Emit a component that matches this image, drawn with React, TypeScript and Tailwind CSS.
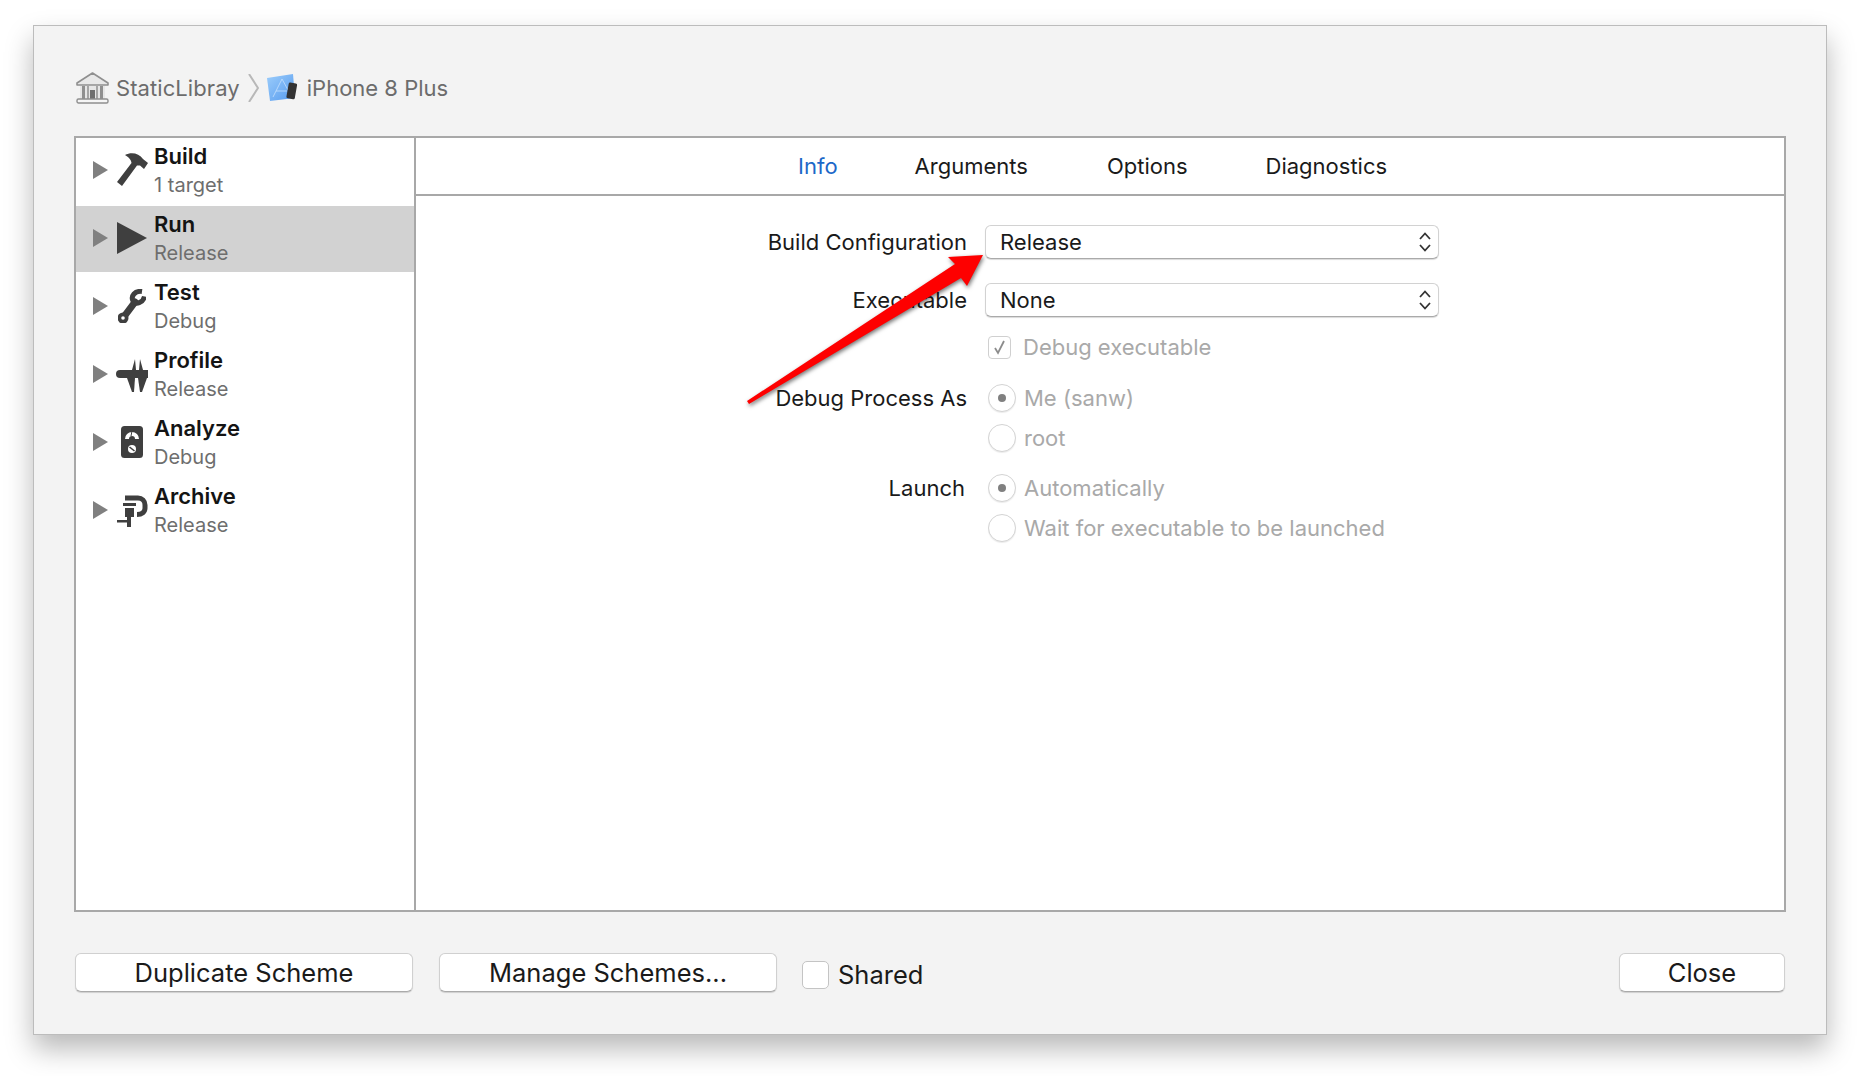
import React from 'react';

const FONT = "font-['Inter','Liberation_Sans',sans-serif]";

function Hammer() {
  return (
    <svg width="32" height="34" viewBox="0 0 32 34">
      <path d="M9 2C15 -1 23 0 27 6L32 10L28 16L24 12.5L21 12.5L6 33L1 29L15.5 10C15 6 12 4 9 2Z" fill="#3f3f3f" />
    </svg>
  );
}

function Play() {
  return (
    <svg width="30" height="32" viewBox="0 0 30 32">
      <polygon points="0,0 30,16 0,32" fill="#3f3f3f" />
    </svg>
  );
}

function Wrench() {
  return (
    <svg width="28" height="34" viewBox="0 0 28 34" fill="none">
      <path d="M5 29L17 13" stroke="#3f3f3f" strokeWidth="7" strokeLinecap="round" />
      <circle cx="5" cy="29" r="5.5" fill="#3f3f3f" />
      <circle cx="5" cy="29" r="1.8" fill="#fff" />
      <path d="M24 2.5C17 1.5 12.5 7 15 12C18 16 25 14 26.5 7.5" stroke="#3f3f3f" strokeWidth="5" />
    </svg>
  );
}

function Caliper() {
  return (
    <svg width="32" height="37" viewBox="0 0 32 37">
      <path d="M4 14H32V22H4A4 4 0 0 1 4 14Z" fill="#3f3f3f" />
      <polygon points="16,14 20,14 19,3" fill="#3f3f3f" />
      <polygon points="23,14 27,14 24,3" fill="#3f3f3f" />
      <polygon points="11,22 19,22 18,36 16,36" fill="#3f3f3f" />
      <polygon points="22,22 31,22 26,36 24,36" fill="#3f3f3f" />
    </svg>
  );
}

function Analyze() {
  return (
    <svg width="22" height="32" viewBox="0 0 22 32">
      <rect width="22" height="32" rx="3.5" fill="#3f3f3f" />
      <path d="M4 13A7 7 0 0 1 18 13L14 13A3 3 0 0 0 8 13Z" fill="#fff" />
      <path d="M10 10L11 5" stroke="#3f3f3f" strokeWidth="1" />
      <circle cx="11" cy="23" r="4" fill="#fff" />
      <path d="M8.5 21L13.5 25" stroke="#3f3f3f" strokeWidth="1.6" />
    </svg>
  );
}

function Clamp() {
  return (
    <svg width="32" height="33" viewBox="0 0 32 33" fill="none">
      <path d="M9 4H22C26 4 29 7 29 11V14C29 18 26 20.5 21 20.5" stroke="#3f3f3f" strokeWidth="5" />
      <rect x="7" y="9" width="13" height="3" fill="#3f3f3f" />
      <rect x="9" y="14" width="9" height="9" fill="#3f3f3f" />
      <rect x="11" y="23" width="4" height="10" fill="#3f3f3f" />
      <rect x="1" y="26" width="14" height="2.5" fill="#3f3f3f" />
    </svg>
  );
}

function Bank() {
  return (
    <svg width="33" height="32" viewBox="0 0 33 32" fill="none">
      <path d="M16.5 1L32 11V13H1V11Z" fill="#e8e8e8" stroke="#8f8f8f" strokeWidth="1.6" strokeLinejoin="round" />
      <rect x="4" y="14" width="25" height="13" fill="#e6e6e6" />
      <rect x="6" y="14" width="3" height="13" fill="#8f8f8f" />
      <rect x="11" y="14" width="2" height="13" fill="#a5a5a5" />
      <rect x="14" y="18" width="5" height="9" fill="#6f6f6f" />
      <rect x="20" y="14" width="2" height="13" fill="#a5a5a5" />
      <rect x="24" y="14" width="3" height="13" fill="#8f8f8f" />
      <rect x="1" y="27" width="31" height="4" rx="1.5" fill="#f5f5f5" stroke="#8f8f8f" strokeWidth="1.4" />
    </svg>
  );
}

function Scheme() {
  return (
    <svg width="31" height="28" viewBox="0 0 31 28" fill="none">
      <defs>
        <linearGradient id="blue" x1="0" y1="0" x2="1" y2="1">
          <stop offset="0" stopColor="#9ccdfb" />
          <stop offset="1" stopColor="#559aee" />
        </linearGradient>
      </defs>
      <polygon points="0,4 26,0 28,24 3,27" fill="url(#blue)" />
      <path d="M6 23L15 5M15 5L21 16M9 17H20" stroke="#c4e0fc" strokeWidth="0.8" />
      <rect x="20.5" y="9" width="8.5" height="16" rx="1.5" fill="#333" transform="rotate(10 25 17)" />
    </svg>
  );
}

function UpDown() {
  return (
    <svg width="14" height="22" viewBox="0 0 14 22" fill="none">
      <path d="M2 8L7 2.5L12 8M2 14L7 19.5L12 14" stroke="#333" strokeWidth="1.8" />
    </svg>
  );
}

function SelectBox({ value }: { value: string }) {
  return (
    <div className="flex items-center justify-between w-[454px] h-[34px] pl-[14px] pr-[6px] bg-white rounded-[6px] border border-[#d2d2d2] border-b-[#aaaaaa] shadow-[0_1px_1px_rgba(0,0,0,0.15)] text-[22px] leading-[28px] text-[#1a1a1a]">
      <span>{value}</span>
      <UpDown />
    </div>
  );
}

function Radio({ on, label }: { on?: boolean; label: string }) {
  return (
    <div className="flex items-center gap-[8px] ml-[3px]">
      <div className="flex items-center justify-center w-[28px] h-[28px] rounded-full bg-white border border-[#d4d4d4] shadow-[0_1px_1px_rgba(0,0,0,0.08)]">
        {on && <div className="w-[8px] h-[8px] rounded-full bg-[#808080]" />}
      </div>
      <span className="text-[22px] leading-[28px] text-[#a9a9a9]">{label}</span>
    </div>
  );
}

function Row({ label, children, className, labelClass }: { label?: string; children: React.ReactNode; className?: string; labelClass?: string }) {
  return (
    <div className={`flex items-center ${className ?? ''}`}>
      <div className={`w-[551px] text-right text-[22px] leading-[28px] text-[#1a1a1a] ${labelClass ?? ''}`}>{label}</div>
      <div className="ml-[18px]">{children}</div>
    </div>
  );
}

function FootButton({ children, className }: { children: React.ReactNode; className?: string }) {
  return (
    <div className={`flex items-center justify-center h-[39px] pt-[1px] bg-white rounded-[6px] border border-[#d0d0d0] border-b-[#aaaaaa] shadow-[0_1px_1px_rgba(0,0,0,0.15)] text-[25.5px] text-[#1a1a1a] ${className ?? ''}`}>
      {children}
    </div>
  );
}

const schemes = [
  { name: 'Build', sub: '1 target', icon: <Hammer /> },
  { name: 'Run', sub: 'Release', icon: <Play />, active: true },
  { name: 'Test', sub: 'Debug', icon: <Wrench /> },
  { name: 'Profile', sub: 'Release', icon: <Caliper /> },
  { name: 'Analyze', sub: 'Debug', icon: <Analyze /> },
  { name: 'Archive', sub: 'Release', icon: <Clamp /> },
];

export default function App() {
  return (
    <div className={`relative w-[1860px] h-[1076px] bg-white pt-[25px] pl-[33px] ${FONT}`}>
      <div className="flex flex-col w-[1794px] h-[1010px] px-[40px] bg-[#f3f3f3] border border-[#bcbcbc] shadow-[0_14px_26px_rgba(0,0,0,0.28)]">
        {/* breadcrumb */}
        <div className="flex items-center h-[110px] pt-[14px] pl-[2px] text-[22px] text-[#6c6c6c]">
          <Bank />
          <span className="ml-[7px] tracking-[0.08px]">StaticLibray</span>
          <svg className="ml-[8px]" width="11" height="28" viewBox="0 0 11 28" fill="none">
            <path d="M1 0L10 14L1 28" stroke="#b8b8b8" strokeWidth="2" />
          </svg>
          <div className="ml-[8px]"><Scheme /></div>
          <span className="ml-[9px]">iPhone 8 Plus</span>
        </div>

        <div className="flex h-[776px] bg-white border-2 border-[#a8a8a8]">
          {/* sidebar */}
          <div className="w-[340px] border-r-2 border-[#a8a8a8]">
            {schemes.map((s) => (
              <div
                key={s.name}
                className={`flex items-center h-[68px] pl-[17px] ${s.active ? 'pb-[2px] bg-[#d2d2d2] border-b-2 border-white' : 'pb-[4px]'}`}
              >
                <svg width="15" height="18" viewBox="0 0 15 18">
                  <polygon points="0,0 15,9 0,18" fill="#808080" />
                </svg>
                <div className="flex justify-center w-[32px] ml-[8px]">{s.icon}</div>
                <div className="ml-[6px] mt-[2px]">
                  <div className="text-[22px] leading-[29px] font-semibold text-[#141414]">{s.name}</div>
                  <div className="text-[20px] leading-[29px] text-[#6e6e6e]">{s.sub}</div>
                </div>
              </div>
            ))}
          </div>

          {/* settings */}
          <div className="flex-1">
            <div className="flex items-center h-[58px] pl-[382px] border-b-2 border-[#a8a8a8] text-[22px] text-[#1a1a1a]">
              <span className="text-[#1c68c8]">Info</span>
              <span className="ml-[77px]">Arguments</span>
              <span className="ml-[79px]">Options</span>
              <span className="ml-[78px]">Diagnostics</span>
            </div>
            <div className="pt-[29px]">
              <Row label="Build Configuration"><SelectBox value="Release" /></Row>
              <Row label="Executable" className="mt-[24px]"><SelectBox value="None" /></Row>
              <Row className="mt-[16px]">
                <div className="flex items-center gap-[12px] ml-[3px]">
                  <div className="flex items-center justify-center w-[23px] h-[23px] rounded-[4px] bg-white border border-[#d0d0d0]">
                    <svg width="15" height="16" viewBox="0 0 15 16" fill="none">
                      <path d="M3 9L6 14L12 2" stroke="#8c8c8c" strokeWidth="1.8" />
                    </svg>
                  </div>
                  <span className="text-[22px] leading-[28px] text-[#a9a9a9]">Debug executable</span>
                </div>
              </Row>
              <Row label="Debug Process As" className="mt-[23px]"><Radio on label="Me (sanw)" /></Row>
              <Row className="mt-[12px]"><Radio label="root" /></Row>
              <Row label="Launch" labelClass="pr-[2px]" className="mt-[22px]"><Radio on label="Automatically" /></Row>
              <Row className="mt-[12px]"><Radio label="Wait for executable to be launched" /></Row>
            </div>
          </div>
        </div>

        {/* footer */}
        <div className="flex items-start mt-[41px] px-[1px]">
          <FootButton className="w-[338px]">Duplicate Scheme</FootButton>
          <FootButton className="w-[338px] ml-[26px]">Manage Schemes...</FootButton>
          <div className="flex items-center h-[42px] ml-[25px] pt-[2px]">
            <div className="w-[27px] h-[28px] rounded-[5px] bg-white border border-[#c4c4c4]" />
            <span className="ml-[9px] text-[25.5px] text-[#1a1a1a]">Shared</span>
          </div>
          <FootButton className="w-[166px] ml-auto">Close</FootButton>
        </div>
      </div>

      {/* annotation arrow */}
      <svg
        className="absolute left-0 top-0 pointer-events-none drop-shadow-[1px_2px_2px_rgba(0,0,0,0.55)]"
        width="1860"
        height="1076"
        viewBox="0 0 1860 1076"
      >
        <polygon points="747,401 955,264 948,257 983,255 967,286 961,278 749,404" fill="#fe0000" />
      </svg>
    </div>
  );
}
